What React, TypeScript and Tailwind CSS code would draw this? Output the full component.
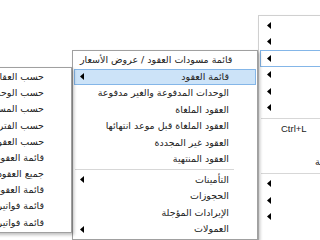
import React from "react";

type Item =
  | { kind: "sep" }
  | { kind: "item"; label?: string; arrow?: boolean; shortcut?: string; active?: boolean; hot?: boolean };

const rightMenu: Item[] = [
  { kind: "item", label: "ملف", arrow: true },
  { kind: "item", label: "تعديل", arrow: true },
  { kind: "item", label: "العقود", arrow: true, hot: true },
  { kind: "item", label: "العقارات", arrow: true },
  { kind: "item", label: "المستأجرين", arrow: true },
  { kind: "item", label: "الحسابات", arrow: true },
  { kind: "sep" },
  { kind: "item", shortcut: "Ctrl+L" },
  { kind: "item" },
  { kind: "item", label: "الصيانة" },
  { kind: "sep" },
  { kind: "item", arrow: true },
  { kind: "item", arrow: true },
  { kind: "item", arrow: true },
  { kind: "item" },
];

const middleMenu: Item[] = [
  { kind: "item", label: "قائمة مسودات العقود / عروض الأسعار" },
  { kind: "item", label: "قائمة العقود", arrow: true, active: true },
  { kind: "item", label: "الوحدات المدفوعة والغير مدفوعة" },
  { kind: "item", label: "العقود الملغاة" },
  { kind: "item", label: "العقود الملغاة قبل موعد انتهائها" },
  { kind: "item", label: "العقود غير المجددة" },
  { kind: "item", label: "العقود المنتهية" },
  { kind: "sep" },
  { kind: "item", label: "التأمينات", arrow: true },
  { kind: "item", label: "الحجوزات" },
  { kind: "item", label: "الإيرادات المؤجلة" },
  { kind: "item", label: "العمولات", arrow: true },
];

const leftMenu = [
  "حسب العقار",
  "حسب الوحدة",
  "حسب المستأجر",
  "حسب الفترة",
  "حسب العقود المنتهية",
  "قائمة العقود حسب الحالة",
  "جميع العقود",
  "قائمة العقود بالتفصيل",
  "قائمة فواتير الإيجار",
  "قائمة فواتير الخدمات",
];

function Arrow() {
  return (
    <svg width="4" height="7" viewBox="0 0 4 7" className="shrink-0">
      <polygon points="4,0 4,7 0,3.5" fill="#000" />
    </svg>
  );
}

export default function App() {
  return (
    <div className="relative w-[320px] h-[240px] overflow-hidden bg-white text-[9.5px] text-[#222] font-['DejaVu_Sans',sans-serif]">
      {/* top-level menu */}
      <div className="absolute left-[258px] top-[15px] w-[200px] bg-white border border-[#d0d0d0] py-[1px] shadow-[2px_2px_3px_rgba(0,0,0,0.2)]">
        {rightMenu.map((it, i) =>
          it.kind === "sep" ? (
            <div key={i} className="h-[5px] flex items-center mx-[2px]">
              <div className="h-px w-full bg-[#d7d7d7]" />
            </div>
          ) : (
            <div
              key={i}
              className={`relative h-[16.5px] mx-[1px] flex items-center border ${
                it.hot ? "border-[#84b6e8] bg-white" : "border-transparent"
              }`}
            >
              <div className="w-[6px]" />
              {it.arrow ? <Arrow /> : <div className="w-[4px]" />}
              {it.shortcut && <span className="ml-[10px] text-[9.5px] font-['Liberation_Sans',sans-serif]">{it.shortcut}</span>}
              {it.label && !it.arrow && (
                <span dir="rtl" className="absolute left-[54px] whitespace-nowrap">
                  {it.label}
                </span>
              )}
            </div>
          )
        )}
      </div>

      {/* contracts submenu */}
      <div className="absolute left-[72px] top-[50px] w-[186px] bg-white border border-[#a0a0a0] py-[1px] shadow-[2px_2px_3px_rgba(0,0,0,0.25)]">
        {middleMenu.map((it, i) =>
          it.kind === "sep" ? (
            <div key={i} className="h-[4px] flex items-center ml-[2px] mr-[23px]">
              <div className="h-px w-full bg-[#d7d7d7]" />
            </div>
          ) : (
            <div
              key={i}
              className={`h-[16.5px] mx-[1px] flex items-center justify-between border pl-[5px] pr-[26px] ${
                it.active ? "bg-[#cce3f8] border-[#84b6e8]" : "border-transparent"
              }`}
            >
              {it.arrow ? <Arrow /> : <div />}
              <span dir="rtl" className="whitespace-nowrap">
                {it.label}
              </span>
            </div>
          )
        )}
      </div>

      {/* contracts list submenu */}
      <div className="absolute right-[248px] top-[67px] w-[180px] bg-white border border-[#a0a0a0] py-[1px] shadow-[2px_2px_3px_rgba(0,0,0,0.25)]">
        {leftMenu.map((label, i) => (
          <div key={i} className="h-[16.2px] mx-[1px] flex items-center justify-end pr-[26px]">
            <span dir="rtl" className="whitespace-nowrap">
              {label}
            </span>
          </div>
        ))}
      </div>
    </div>
  );
}
